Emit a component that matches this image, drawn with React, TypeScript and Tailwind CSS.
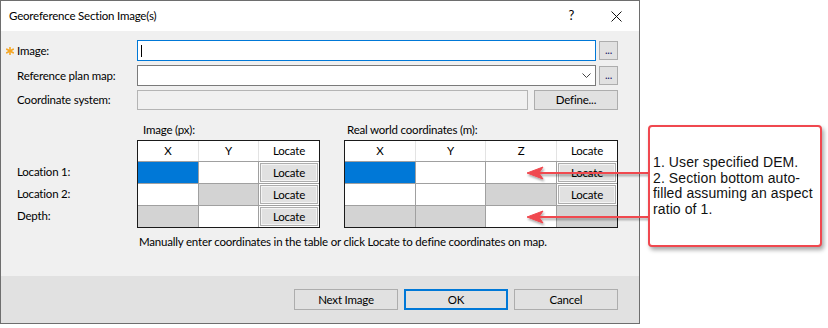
import React from "react";

const UI_FONT = "font-['Lato',sans-serif] text-[11.5px] tracking-[-0.2px] text-black";

function DotsButton() {
  return (
    <div className="w-[19px] h-[19px] ml-[3px] border border-[#adadad] bg-[#e1e1e1] flex items-center justify-center text-[11px] leading-none pb-[2px] text-[#1a1a6a]">
      ...
    </div>
  );
}

function CellButton() {
  return (
    <div className="w-full h-full p-[1px]">
      <div className="w-full h-full border border-[#adadad] bg-[#e1e1e1] shadow-[inset_0_0_0_1px_#f4f4f4] flex items-center justify-center">
        Locate
      </div>
    </div>
  );
}

type Cell = "blue" | "white" | "gray" | "button";

function cellClass(c: Cell) {
  if (c === "blue") return "bg-[#0078d7]";
  if (c === "gray") return "bg-[#d3d3d3]";
  return "bg-white";
}

function GridTable({ headers, widths, rows }: { headers: string[]; widths: string[]; rows: Cell[][] }) {
  return (
    <div className="border border-[#1a1a1a] bg-white">
      <div className="flex h-[20px]">
        {headers.map((h, i) => (
          <div
            key={h}
            className={`${widths[i]} flex items-center justify-center ${i < headers.length - 1 ? "border-r border-[#e3e3e3]" : ""}`}
          >
            {h}
          </div>
        ))}
      </div>
      {rows.map((row, r) => (
        <div key={r} className="flex h-[22px] border-t border-[#a0a0a0]">
          {row.map((c, i) => (
            <div
              key={i}
              className={`${widths[i]} h-full ${cellClass(c)} ${i < row.length - 1 ? "border-r border-[#a0a0a0]" : ""}`}
            >
              {c === "button" && <CellButton />}
            </div>
          ))}
        </div>
      ))}
    </div>
  );
}

function Star() {
  return (
    <svg width="8" height="8" viewBox="0 0 8 8" className="mr-[3px]">
      <g stroke="#f5a623" strokeWidth="1.6" strokeLinecap="round">
        <line x1="4" y1="0.5" x2="4" y2="7.5" />
        <line x1="0.8" y1="2.2" x2="7.2" y2="5.8" />
        <line x1="0.8" y1="5.8" x2="7.2" y2="2.2" />
      </g>
    </svg>
  );
}

export default function App() {
  return (
    <div className="relative w-[828px] h-[328px] bg-white overflow-hidden">
      <div className={`w-[640px] h-[324px] border border-[#6e6e6e] flex flex-col bg-[#f0f0f0] ${UI_FONT}`}>
        {/* title bar */}
        <div className="h-[30px] bg-white flex items-center pl-[8px] pr-[17px]">
          <span className="flex-1">Georeference Section Image(s)</span>
          <span className="text-[13px] mr-[37px]">?</span>
          <svg width="11" height="11" viewBox="0 0 11 11">
            <path d="M0.5 0.5 L10.5 10.5 M10.5 0.5 L0.5 10.5" stroke="#111" strokeWidth="1" />
          </svg>
        </div>

        {/* body */}
        <div className="flex-1 pt-[9px] pr-[21px] flex flex-col">
          <div className="flex items-center h-[21px]">
            <div className="w-[136px] pl-[5px] flex items-center">
              <Star />
              <span>Image:</span>
            </div>
            <div className="flex-1 h-full border border-[#0078d7] bg-white flex items-center pl-[3px]">
              <div className="w-px h-[12px] bg-black" />
            </div>
            <DotsButton />
          </div>

          <div className="flex items-center h-[21px] mt-[4px]">
            <div className="w-[136px] pl-[16px]">Reference plan map:</div>
            <div className="flex-1 h-full border border-[#7a7a7a] bg-white flex items-center justify-end pr-[4px]">
              <svg width="9" height="5" viewBox="0 0 9 5">
                <path d="M0.5 0.5 L4.5 4.5 L8.5 0.5" fill="none" stroke="#444" strokeWidth="1" />
              </svg>
            </div>
            <DotsButton />
          </div>

          <div className="flex items-center h-[20px] mt-[4px]">
            <div className="w-[136px] pl-[16px]">Coordinate system:</div>
            <div className="flex-1 h-full border border-[#b4b4b4] bg-[#f0f0f0]" />
            <div className="w-[84px] h-full ml-[6px] border border-[#adadad] bg-[#e1e1e1] flex items-center justify-center">
              Define...
            </div>
          </div>

          <div className="flex mt-[12px]">
            <div className="w-[136px] pl-[16px] pt-[39px] flex flex-col">
              <div className="h-[22px] flex items-center">Location 1:</div>
              <div className="h-[22px] flex items-center">Location 2:</div>
              <div className="h-[22px] flex items-center">Depth:</div>
            </div>
            <div className="flex flex-col">
              <div className="h-[16px] leading-[16px] pl-[6px] mb-[2px]">Image (px):</div>
              <GridTable
                headers={["X", "Y", "Locate"]}
                widths={["w-[61px]", "w-[60px]", "w-[60px]"]}
                rows={[
                  ["blue", "white", "button"],
                  ["white", "gray", "button"],
                  ["gray", "white", "button"],
                ]}
              />
            </div>
            <div className="flex flex-col ml-[24px]">
              <div className="h-[16px] leading-[16px] pl-[3px] mb-[2px]">Real world coordinates (m):</div>
              <GridTable
                headers={["X", "Y", "Z", "Locate"]}
                widths={["w-[71px]", "w-[70px]", "w-[71px]", "w-[60px]"]}
                rows={[
                  ["blue", "white", "white", "button"],
                  ["white", "white", "gray", "button"],
                  ["gray", "gray", "white", "gray"],
                ]}
              />
            </div>
          </div>

          <div className="pl-[138px] mt-[6px] h-[16px] leading-[16px]">
            Manually enter coordinates in the table or click Locate to define coordinates on map.
          </div>
        </div>

        {/* footer */}
        <div className="h-[47px] bg-[#e1e1e1] flex justify-end items-start pt-[13px] pr-[21px] gap-[6px]">
          <div className="w-[104px] h-[21px] border border-[#adadad] bg-[#e1e1e1] flex items-center justify-center">
            Next Image
          </div>
          <div className="w-[104px] h-[21px] border-2 border-[#0078d7] bg-[#e1e1e1] flex items-center justify-center">
            OK
          </div>
          <div className="w-[104px] h-[21px] border border-[#adadad] bg-[#e1e1e1] flex items-center justify-center">
            Cancel
          </div>
        </div>
      </div>

      {/* annotation arrows */}
      <svg className="absolute left-0 top-0 pointer-events-none" width="828" height="328">
        <defs>
          <filter id="sh" x="-10%" y="-50%" width="120%" height="300%">
            <feDropShadow dx="1" dy="2" stdDeviation="1.2" floodColor="#000" floodOpacity="0.35" />
          </filter>
        </defs>
        <g filter="url(#sh)" fill="#f0484f" stroke="#f0484f">
          <line x1="536" y1="173" x2="649" y2="173" strokeWidth="2" />
          <path d="M527 173 L543 167 L539 173 L543 179 Z" strokeWidth="1" />
          <line x1="536" y1="217" x2="649" y2="217" strokeWidth="2" />
          <path d="M527 217 L543 211 L539 217 L543 223 Z" strokeWidth="1" />
        </g>
      </svg>

      {/* callout */}
      <div className="absolute left-[648px] top-[125px] w-[174px] h-[122px] border-2 border-[#f0484f] rounded-[4px] bg-white shadow-[2px_3px_4px_rgba(0,0,0,0.35)] flex items-center pl-[3px] font-['Liberation_Sans',Arial,sans-serif] text-[14px] tracking-[0.1px] leading-[15.5px] text-[#111] whitespace-nowrap">
        <div>
          1. User specified DEM.
          <br />
          2. Section bottom auto-
          <br />
          filled assuming an aspect
          <br />
          ratio of 1.
        </div>
      </div>
    </div>
  );
}
